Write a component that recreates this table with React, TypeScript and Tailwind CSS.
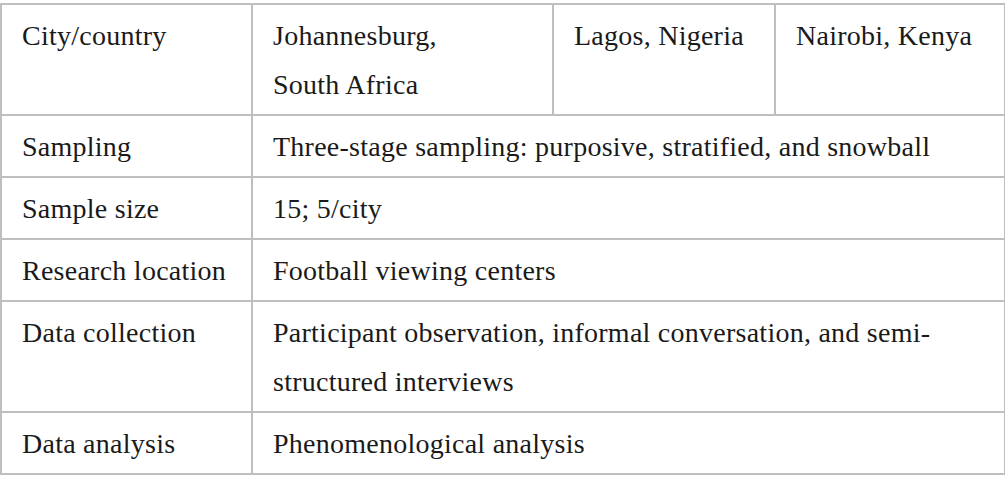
import React from "react";

const cell =
  "border-2 border-[#bfbfbf] px-[20px] pt-[6px] pb-[5px] align-top text-left font-normal";

export default function App() {
  const rows: [string, string][] = [
    ["Sampling", "Three-stage sampling: purposive, stratified, and snowball"],
    ["Sample size", "15; 5/city"],
    ["Research location", "Football viewing centers"],
    [
      "Data collection",
      "Participant observation, informal conversation, and semi-structured interviews",
    ],
    ["Data analysis", "Phenomenological analysis"],
  ];
  return (
    <div className="w-[1005px] h-[491px] bg-white pt-[3px]">
      <table
        className="table-fixed border-collapse w-[1004px] text-[#1a1a1a] text-[28px] leading-[49px] tracking-[0.25px]"
        style={{ fontFamily: '"Liberation Serif", "DejaVu Serif", serif' }}
      >
        <colgroup>
          <col className="w-[251px]" />
          <col className="w-[301px]" />
          <col className="w-[222px]" />
          <col className="w-[230px]" />
        </colgroup>
        <tbody>
          <tr>
            <td className={cell}>City/country</td>
            <td className={cell}>
              Johannesburg,
              <br />
              South Africa
            </td>
            <td className={cell}>Lagos, Nigeria</td>
            <td className={cell}>Nairobi, Kenya</td>
          </tr>
          {rows.map(([a, b]) => (
            <tr key={a}>
              <td className={cell}>{a}</td>
              <td className={cell} colSpan={3}>
                {b}
              </td>
            </tr>
          ))}
        </tbody>
      </table>
    </div>
  );
}
